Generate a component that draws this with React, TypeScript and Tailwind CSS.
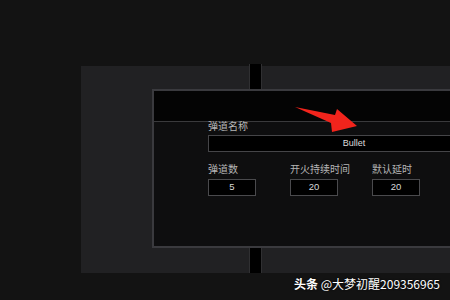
import React from "react";

const cjk = { fontFamily: '"Noto Sans CJK SC", "Noto Sans", sans-serif' };

function Field({ label, value }: { label: string; value: string }) {
  return (
    <div className="flex flex-col">
      <div className="text-[10px] leading-[12px] text-[#b5b5b5]" style={cjk}>
        {label}
      </div>
      <div className="mt-[4px] w-[48px] h-[17px] border border-[#4a4a4d] bg-black flex items-center justify-center text-[9.5px] text-[#d8d8d8] font-['Liberation_Sans',sans-serif]">
        {value}
      </div>
    </div>
  );
}

export default function App() {
  return (
    <div className="relative w-[450px] h-[300px] overflow-hidden bg-[#131313] flex flex-col">
      <div className="relative mt-[66px] ml-[81px] w-[369px] h-[207px] bg-[#212123] pt-[23px] pl-[71px]">
        <div className="absolute left-[168px] -top-[2px] w-[13px] h-[25px] bg-black border-x border-[#303032]" />
        <div className="absolute left-[168px] top-[182px] w-[13px] h-[25px] bg-black border-x border-[#303032]" />
        <div className="w-[320px] h-[159px] border-2 border-r-0 border-[#3a3a3e] bg-[#0e0e0f] flex flex-col">
          <div className="h-[31px] bg-[#040404] border-b border-[#3a3a3c] shrink-0" />
          <div className="pl-[54px] flex flex-col">
            <div className="-mt-[2px] text-[10px] leading-[12px] text-[#b5b5b5]" style={cjk}>
              弹道名称
            </div>
            <div className="mt-[3px] w-[292px] h-[17px] border border-[#454548] bg-black flex items-center justify-center text-[9px] text-[#dcdcdc] font-['Liberation_Sans',sans-serif] shrink-0">
              Bullet
            </div>
            <div className="mt-[11px] grid grid-cols-[82px_82px_82px]">
              <Field label="弹道数" value="5" />
              <Field label="开火持续时间" value="20" />
              <Field label="默认延时" value="20" />
            </div>
          </div>
        </div>
      </div>
      <div className="mt-[4px] flex justify-end pr-[10px]">
        <div
          className="text-[12px] leading-[14px] text-white [text-shadow:0_0_2px_rgba(0,0,0,0.9)]"
          style={cjk}
        >
          <span className="font-bold">头条</span> @大梦初醒209356965
        </div>
      </div>
      <svg
        className="absolute left-0 top-0 pointer-events-none"
        width="450"
        height="300"
        viewBox="0 0 450 300"
      >
        <polygon
          points="295,107 335,115 337,109 357,126 332,132 331,123"
          fill="#f2241c"
        />
      </svg>
    </div>
  );
}
